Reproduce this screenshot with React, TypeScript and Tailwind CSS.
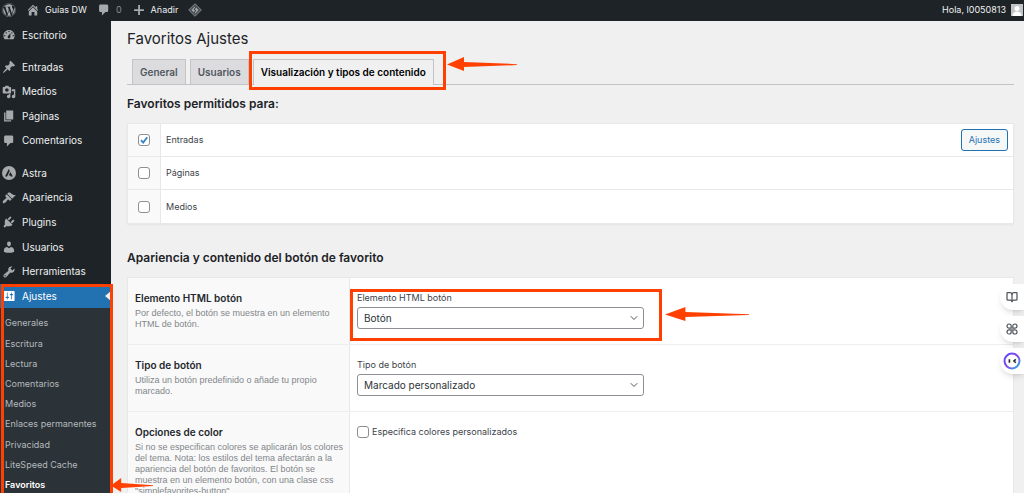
import React, { useState } from 'react';
import { FaWordpress } from 'react-icons/fa';
import { BookOpen, ChevronDown } from 'lucide-react';
import { clsx } from 'clsx';

const icons = {
  dashboard: 'M3.76 16h12.48c1.1-1.37 1.76-3.11 1.76-5 0-4.42-3.58-8-8-8s-8 3.58-8 8c0 1.89.66 3.63 1.76 5zM10 4c.55 0 1 .45 1 1s-.45 1-1 1-1-.45-1-1 .45-1 1-1zM6 6c.55 0 1 .45 1 1s-.45 1-1 1-1-.45-1-1 .45-1 1-1zm8 0c.55 0 1 .45 1 1s-.45 1-1 1-1-.45-1-1 .45-1 1-1zm-5.37 5.55L12 7v6c0 1.1-.9 2-2 2s-2-.9-2-2c0-.57.24-1.08.63-1.45zM4 10c.55 0 1 .45 1 1s-.45 1-1 1-1-.45-1-1 .45-1 1-1zm12 0c.55 0 1 .45 1 1s-.45 1-1 1-1-.45-1-1 .45-1 1-1z',
  home: 'M16 8.5l1.53 1.53-1.06 1.06L10 4.6l-6.47 6.49-1.06-1.06L10 2.5l4 4v-2h2v4zm-6-2.46l6 5.99V18h-4v-5H8v5H4v-5.97z',
  pin: 'M10.44 3.02l1.82-1.82 6.36 6.35-1.83 1.82c-1.05-.68-2.48-.57-3.41.36l-.75.75c-.92.93-1.04 2.35-.35 3.41l-1.83 1.82-2.41-2.41-2.8 2.79c-.42.42-3.38 2.71-3.8 2.29s1.86-3.39 2.28-3.81l2.79-2.79L4.1 9.36l1.83-1.82c1.05.69 2.48.57 3.4-.36l.75-.75c.93-.92 1.05-2.35.36-3.41z',
  media: 'M13 11V4c0-.55-.45-1-1-1h-1.67L9 1H5L3.67 3H2c-.55 0-1 .45-1 1v7c0 .55.45 1 1 1h10c.55 0 1-.45 1-1zM7 4.5c1.38 0 2.5 1.12 2.5 2.5S8.38 9.5 7 9.5 4.5 8.38 4.5 7 5.62 4.5 7 4.5zM14 6h5v10.5c0 1.38-1.12 2.5-2.5 2.5S14 17.88 14 16.5s1.12-2.5 2.5-2.5c.17 0 .34.02.5.05V9h-3V6zm-4 8.05V13h2v3.5c0 1.38-1.12 2.5-2.5 2.5S7 17.88 7 16.5 8.12 14 9.5 14c.17 0 .34.02.5.05z',
  page: 'M6 15V2h10v13H6zm-1 1h8v2H3V5h2v11z',
  comment: 'M5 2h9c1.1 0 2 .9 2 2v7c0 1.1-.9 2-2 2h-2l-5 5v-5H5c-1.1 0-2-.9-2-2V4c0-1.1.9-2 2-2z',
  astra: 'M10 0a10 10 0 1 0 0 20 10 10 0 0 0 0-20zM9.6 4.2l1.5 3L7.3 15H4.3zM11.9 8.6l3.7 6.4h-3.1l-.7-1.6H9.6z',
  brush: 'M14.48 11.06L7.41 3.99l1.5-1.5c.5-.56 2.3-.47 3.51.32 1.21.8 1.43 1.28 2.91 2.1 1.18.64 2.45 1.26 4.45.85zm-.71.71L6.7 4.7 4.93 6.47c-.39.39-.39 1.02 0 1.41l1.06 1.06c.39.39.39 1.03 0 1.42-.6.6-1.43 1.11-2.21 1.69-.35.26-.7.53-1.01.84C1.43 14.23.4 16.08 1.4 17.07c.99 1 2.84-.03 4.18-1.36.31-.31.58-.66.85-1.02.57-.78 1.08-1.61 1.69-2.21.39-.39 1.02-.39 1.41 0l1.06 1.06c.39.39 1.02.39 1.41 0z',
  plug: 'M13.11 4.36L9.87 7.6 8 5.73l3.24-3.24c.35-.34 1.05-.2 1.56.32.52.51.66 1.21.31 1.55zm-8 1.77l.91-1.12 9.01 9.01-1.19.84c-.71.71-2.63 1.16-3.82 1.16H6.14L4.9 17.26c-.59.59-1.54.59-2.12 0-.59-.58-.59-1.53 0-2.12l1.24-1.24v-3.88c0-1.13.4-3.19 1.09-3.89zm7.26 3.97l3.24-3.24c.34-.35 1.04-.21 1.55.31.52.51.66 1.21.31 1.55l-3.24 3.25z',
  user: 'M10 9.25c-2.27 0-2.73-3.44-2.73-3.44C7 4.02 7.82 2 9.97 2c2.16 0 2.98 2.02 2.71 3.81 0 0-.41 3.44-2.68 3.44zm0 2.57L12.72 10c2.39 0 4.52 2.33 4.52 4.53v2.49s-3.65 1.13-7.24 1.13c-3.65 0-7.24-1.13-7.24-1.13v-2.49c0-2.25 1.94-4.48 4.47-4.48z',
  wrench: 'M16.68 9.77c-1.34 1.34-3.3 1.67-4.95.99l-5.41 6.52c-.99.99-2.59.99-3.58 0s-.99-2.59 0-3.57l6.52-5.42c-.68-1.65-.35-3.61.99-4.95 1.28-1.28 3.12-1.62 4.72-1.06l-2.89 2.89 2.82 2.82 2.86-2.87c.53 1.58.18 3.39-1.08 4.65zM3.81 16.21c.4.39 1.04.39 1.43 0 .4-.4.4-1.04 0-1.43-.39-.4-1.03-.4-1.43 0-.39.39-.39 1.03 0 1.43z',
  settings: 'M18 16V4c0-.55-.45-1-1-1H3c-.55 0-1 .45-1 1v12c0 .55.45 1 1 1h14c.55 0 1-.45 1-1zM8 11h1c.55 0 1 .45 1 1s-.45 1-1 1H8v1.5c0 .28-.22.5-.5.5s-.5-.22-.5-.5V13H6c-.55 0-1-.45-1-1s.45-1 1-1h1V5.5c0-.28.22-.5.5-.5s.5.22.5.5V11zm5-2h-1c-.55 0-1-.45-1-1s.45-1 1-1h1V5.5c0-.28.22-.5.5-.5s.5.22.5.5V7h1c.55 0 1 .45 1 1s-.45 1-1 1h-1v5.5c0 .28-.22.5-.5.5s-.5-.22-.5-.5V9z',
  plus: 'M17 9v2.4h-5.6V17H8.8v-5.6H3V9h5.8V3h2.6v6z',
};

type IconName = keyof typeof icons;

function DashIcon({ name, className }: { name: IconName; className?: string }) {
  return (
    <svg viewBox="0 0 20 20" fill="currentColor" fillRule="evenodd" aria-hidden="true" className={clsx('shrink-0', className)}>
      <path d={icons[name]} />
    </svg>
  );
}

const contentMenu: { icon: IconName; label: string }[] = [
  { icon: 'pin', label: 'Entradas' },
  { icon: 'media', label: 'Medios' },
  { icon: 'page', label: 'Páginas' },
  { icon: 'comment', label: 'Comentarios' },
];

const siteMenu: { icon: IconName; label: string }[] = [
  { icon: 'astra', label: 'Astra' },
  { icon: 'brush', label: 'Apariencia' },
  { icon: 'plug', label: 'Plugins' },
  { icon: 'user', label: 'Usuarios' },
  { icon: 'wrench', label: 'Herramientas' },
];

const settingsMenu = [
  'Generales',
  'Escritura',
  'Lectura',
  'Comentarios',
  'Medios',
  'Enlaces permanentes',
  'Privacidad',
  'LiteSpeed Cache',
  'Favoritos',
];

function MenuLink({ icon, label }: { icon: IconName; label: string }) {
  return (
    <a href="#" className="flex items-center gap-1.5 pl-0.5 text-[10px] text-[#f0f0f1]">
      <DashIcon name={icon} className="size-3.5 text-[#a7aaad]" />
      {label}
    </a>
  );
}

function Arrow({ className }: { className: string }) {
  return (
    <svg viewBox="0 0 70 16" preserveAspectRatio="none" aria-hidden="true" className={clsx('pointer-events-none absolute z-20', className)}>
      <path d="M0 8 17 0v5.4L70 7.6v1L17 10.6V15z" fill="#ff4000" />
    </svg>
  );
}

function Checkbox({ id, defaultChecked }: { id: string; defaultChecked?: boolean }) {
  return (
    <span className="relative block size-3 shrink-0">
      <input
        id={id}
        type="checkbox"
        defaultChecked={defaultChecked}
        className="peer block size-3 appearance-none rounded-[3px] border border-[#8c8f94] bg-white"
      />
      <svg viewBox="0 0 12 12" aria-hidden="true" className="pointer-events-none absolute inset-0 hidden size-3 peer-checked:block">
        <path d="M3 6.2 5.2 8.6 9.2 3.2" fill="none" stroke="#3582c4" strokeWidth="1.8" />
      </svg>
    </span>
  );
}

function SelectField({ id, label, options }: { id: string; label: string; options: string[] }) {
  return (
    <div className="w-[287px] max-w-full">
      <label htmlFor={id} className="block text-[9px] leading-[14px] text-[#3c434a]">{label}</label>
      <div className="relative mt-0.5">
        <select id={id} className="block h-[22px] w-full appearance-none rounded-[3px] border border-[#8c8f94] bg-white px-1.5 text-[10px] text-[#2c3338]">
          {options.map((option) => (
            <option key={option}>{option}</option>
          ))}
        </select>
        <ChevronDown className="pointer-events-none absolute top-[5px] right-1 size-3 text-[#50575e]" />
      </div>
    </div>
  );
}

function SettingRow({ title, description, children }: { title: string; description: string; children: React.ReactNode }) {
  return (
    <div className="flex min-h-[67px] border-b border-[#eeeeee]">
      <div className="w-[222px] shrink-0 border-r border-[#e8e8e8] bg-[#f9f9f9] pt-[13px] pr-0.5 pb-3 pl-[7px]">
        <h3 className="text-[10px] leading-[14px] font-semibold text-[#23282d]">{title}</h3>
        <p className="mt-[3px] font-['Liberation_Sans',sans-serif] text-[9px] leading-[11px] text-[#82868a]">{description}</p>
      </div>
      <div className="flex-1 px-[7px] pt-[13px]">{children}</div>
    </div>
  );
}

export default function App() {
  const [tab, setTab] = useState('Visualización y tipos de contenido');

  return (
    <div className="flex h-screen flex-col overflow-hidden bg-[#f0f0f1] font-[Inter,sans-serif] text-[#3c434a]">
      <header className="flex h-[21px] shrink-0 items-center bg-[#1d2327] pr-px pb-0.5 pl-0.5 text-[9px] text-[#f0f0f1]">
        <a href="#" aria-label="WordPress">
          <FaWordpress className="size-3.5 text-[#a7aaad]" />
        </a>
        <a href="#" className="ml-2.5 flex items-center gap-[5px]">
          <DashIcon name="home" className="size-3.5 text-[#a7aaad]" />
          Guías DW
        </a>
        <a href="#" className="ml-2.5 flex items-center gap-[5px] text-[#8c8f94]">
          <DashIcon name="comment" className="size-3.5 text-[#a7aaad]" />
          0
        </a>
        <a href="#" className="ml-2.5 flex items-center gap-[5px]">
          <DashIcon name="plus" className="size-3.5 text-[#a7aaad]" />
          Añadir
        </a>
        <a href="#" aria-label="LiteSpeed" className="ml-2.5">
          <svg viewBox="0 0 16 16" aria-hidden="true" className="size-3.5">
            <path d="M8 .8 15.2 8 8 15.2.8 8z" fill="#4b5156" stroke="#8c9095" strokeWidth="1" />
            <path d="M8 4 12 8 8 12 4 8z" fill="#a7aaad" />
            <path d="m9 4.8-2 2.7 1.8 1L7 11.2" fill="none" stroke="#1d2327" strokeWidth="1.1" />
          </svg>
        </a>
        <a href="#" className="ml-auto flex items-center gap-[5px]">
          Hola, l0050813
          <span className="block size-3 overflow-hidden bg-[#c3c4c7]">
            <svg viewBox="0 0 12 12" fill="#ffffff" aria-hidden="true">
              <circle cx="6" cy="4.5" r="2.5" />
              <path d="M1.5 12c0-3 1.8-4.6 4.5-4.6s4.5 1.6 4.5 4.6z" />
            </svg>
          </span>
        </a>
      </header>

      <div className="flex min-h-0 flex-1">
        <nav className="relative z-10 w-[111px] shrink-0 bg-[#1d2327] pt-0.5">
          <div className="grid h-6">
            <MenuLink icon="dashboard" label="Escritorio" />
          </div>
          <div className="mt-2 grid h-[98px] auto-rows-fr">
            {contentMenu.map((item) => (
              <MenuLink key={item.label} {...item} />
            ))}
          </div>
          <div className="mt-2 grid h-[123px] auto-rows-fr">
            {siteMenu.map((item) => (
              <MenuLink key={item.label} {...item} />
            ))}
          </div>
          <div className="relative">
            <a href="#" className="relative flex h-6 items-center gap-1.5 bg-[#2271b1] pl-0.5 text-[10px] text-white">
              <DashIcon name="settings" className="size-3.5" />
              Ajustes
              <span className="absolute right-0 border-y-5 border-r-6 border-y-transparent border-r-[#f0f0f1]" />
            </a>
            <ul className="grid h-[191px] auto-rows-fr bg-[#2c3338] pt-[5px] pb-1 text-[9px] text-[#b4b9be]">
              {settingsMenu.map((label) => (
                <li key={label} className="flex items-center pl-[5px] whitespace-nowrap">
                  <a href="#" className={clsx(label === 'Favoritos' && 'font-semibold text-white')}>{label}</a>
                </li>
              ))}
            </ul>
            <div className="pointer-events-none absolute inset-y-0 -right-0.5 left-px border-3 border-[#ff4000]" />
            <Arrow className="bottom-1.5 left-full h-[15px] w-[42px]" />
          </div>
        </nav>

        <main className="min-w-0 flex-1 pr-2.5 pl-4">
          <h1 className="pt-[7px] text-[15px] leading-[22px] text-[#1d2327]">Favoritos Ajustes</h1>

          <div role="tablist" className="mt-[9px] flex border-b border-[#c3c4c7] pl-[5px] text-[10px] font-semibold">
            {['General', 'Usuarios'].map((label) => (
              <button
                key={label}
                role="tab"
                aria-selected={tab === label}
                onClick={() => setTab(label)}
                className="mr-1 h-[25px] border border-b-0 border-[#c3c4c7] bg-[#dcdcde] px-[7px] text-[#50575e]"
              >
                {label}
              </button>
            ))}
            <div className="relative">
              <button
                role="tab"
                aria-selected={tab === 'Visualización y tipos de contenido'}
                onClick={() => setTab('Visualización y tipos de contenido')}
                className="-mb-px h-[26px] border border-b-0 border-[#c3c4c7] bg-[#f0f0f1] px-[7px] text-black"
              >
                Visualización y tipos de contenido
              </button>
              <div className="pointer-events-none absolute -top-2 -right-3 -bottom-1.5 -left-1 border-3 border-[#ff4000]" />
              <Arrow className="-top-0.5 left-full ml-[13px] h-[15px] w-[70px]" />
            </div>
          </div>

          <h2 className="mt-2.5 text-[12px] leading-[18px] font-semibold text-[#1d2327]">Favoritos permitidos para:</h2>
          <div className="mt-2.5 divide-y divide-[#e8e8e8] border border-[#e8e8e8] bg-white shadow-xs">
            {['Entradas', 'Páginas', 'Medios'].map((label) => (
              <div key={label} className="flex h-[33px] text-[9px]">
                <div className="flex w-[33px] items-center justify-center border-r border-[#e8e8e8] bg-[#f9f9f9]">
                  <Checkbox id={label} defaultChecked={label === 'Entradas'} />
                </div>
                <div className="flex flex-1 items-center justify-between px-[5px]">
                  <label htmlFor={label}>{label}</label>
                  {label === 'Entradas' && (
                    <button className="h-[22px] rounded-[3px] border border-[#2271b1] bg-[#f6f7f7] px-[7px] text-[#2271b1]">Ajustes</button>
                  )}
                </div>
              </div>
            ))}
          </div>

          <h2 className="mt-[25px] text-[12px] leading-[18px] font-semibold text-[#1d2327]">Apariencia y contenido del botón de favorito</h2>
          <div className="mt-2.5 border border-[#e8e8e8] bg-white">
            <SettingRow title="Elemento HTML botón" description="Por defecto, el botón se muestra en un elemento HTML de botón.">
              <div className="relative w-[287px]">
                <SelectField id="element" label="Elemento HTML botón" options={['Botón', 'Enlace']} />
                <div className="pointer-events-none absolute -top-0.5 -right-[18px] -bottom-3 -left-[7px] border-3 border-[#ff4000]" />
                <Arrow className="top-4 left-full ml-[21px] h-[15px] w-[84px]" />
              </div>
            </SettingRow>
            <SettingRow title="Tipo de botón" description="Utiliza un botón predefinido o añade tu propio marcado.">
              <SelectField id="type" label="Tipo de botón" options={['Marcado personalizado', 'Predefinido']} />
            </SettingRow>
            <SettingRow
              title="Opciones de color"
              description={'Si no se especifican colores se aplicarán los colores del tema. Nota: los estilos del tema afectarán a la apariencia del botón de favoritos. El botón se muestra en un elemento botón, con una clase css "simplefavorites-button".'}
            >
              <div className="flex items-center gap-[3px] text-[9px] leading-[14px]">
                <Checkbox id="colors" />
                <label htmlFor="colors">Especifica colores personalizados</label>
              </div>
            </SettingRow>
          </div>
        </main>
      </div>

      {/* Floating assistant tools */}
      <div className="fixed top-[284px] right-0 z-30 flex flex-col items-end gap-1.5 text-[#50575e]">
        <button aria-label="Leer" className="flex h-[26px] w-6 items-center justify-center rounded-l-full bg-white shadow-md">
          <BookOpen strokeWidth={2.5} className="size-3" />
        </button>
        <button aria-label="Atajos" className="flex h-[26px] w-6 items-center justify-center rounded-l-full bg-white shadow-md">
          <svg viewBox="0 0 12 12" fill="none" stroke="currentColor" strokeWidth="1.2" aria-hidden="true" className="size-3">
            <path d="M5.2 5.2H3.1a2.1 2.1 0 1 1 2.1-2.1zM6.8 5.2V3.1a2.1 2.1 0 1 1 2.1 2.1zM6.8 6.8h2.1a2.1 2.1 0 1 1-2.1 2.1zM5.2 6.8v2.1a2.1 2.1 0 1 1-2.1-2.1z" />
          </svg>
        </button>
        <button aria-label="Asistente" className="flex h-[26px] w-6 items-center justify-center rounded-l-full bg-white shadow-md">
          <svg viewBox="0 0 18 18" className="size-[18px]" aria-hidden="true">
            <defs>
              <linearGradient id="ring" x1="0" y1="0" x2="1" y2="1">
                <stop offset="0" stopColor="#5b4bff" />
                <stop offset="0.5" stopColor="#8a45f0" />
                <stop offset="1" stopColor="#27b5e8" />
              </linearGradient>
            </defs>
            <circle cx="9" cy="9" r="7.5" fill="#ffffff" stroke="url(#ring)" strokeWidth="2" />
            <path d="M6.4 7.2v3.6M12.8 7.4 11 9l1.8 1.6" fill="none" stroke="#1d2327" strokeWidth="1.6" />
          </svg>
        </button>
      </div>
    </div>
  );
}
